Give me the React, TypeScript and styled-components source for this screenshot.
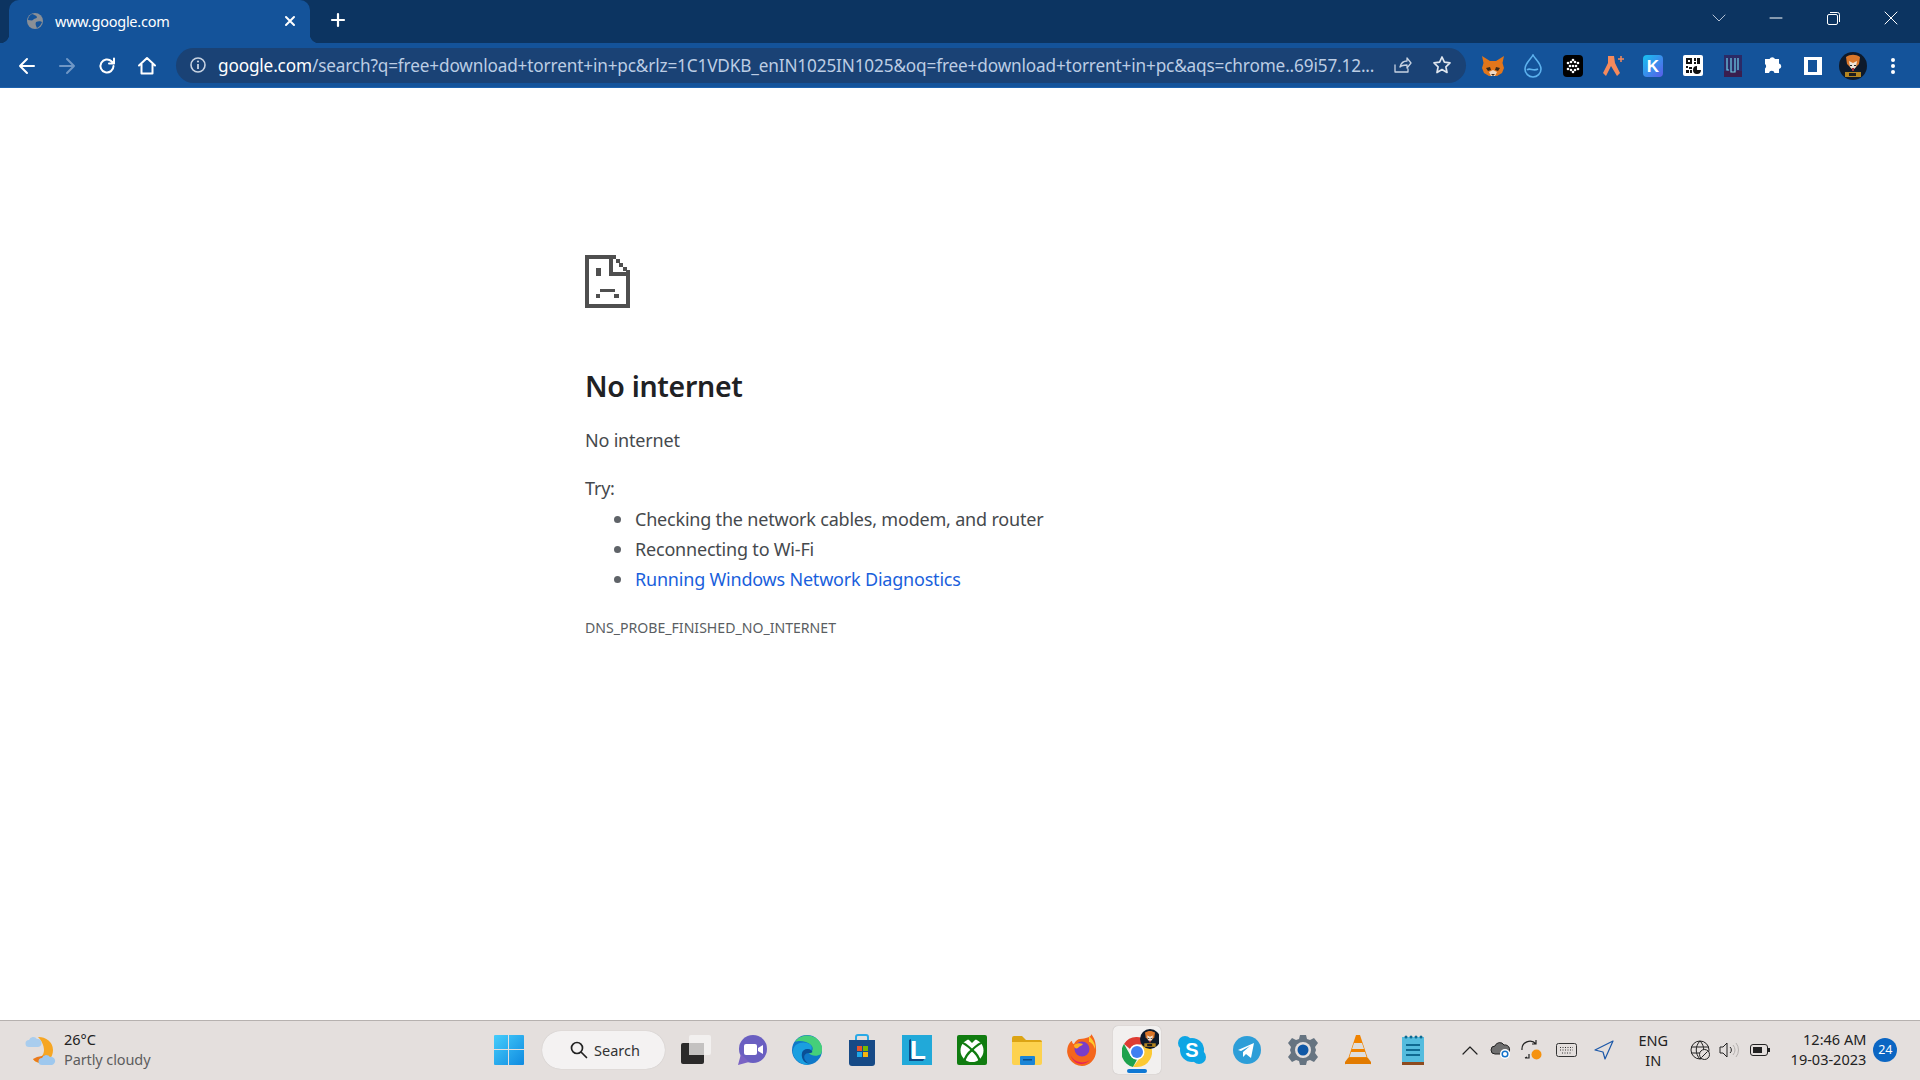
import React from 'react';
import styled, { createGlobalStyle } from 'styled-components';

const GlobalStyle = createGlobalStyle`
  html, body { margin: 0; padding: 0; height: 100%; background: #fff; }
  body { font-family: "Noto Sans", "Open Sans", sans-serif; overflow: hidden; }
  #root { height: 100%; }
`;

const Screen = styled.div`
  width: 1920px;
  height: 1080px;
  display: flex;
  flex-direction: column;
`;

const TabStrip = styled.div`
  height: 43px;
  background: #0c3461;
  display: flex;
  align-items: flex-end;
  padding-left: 9px;
  flex-shrink: 0;
`;

const Tab = styled.div`
  position: relative;
  width: 301px;
  height: 43px;
  background: #14539a;
  border-radius: 10px 10px 0 0;
  display: flex;
  align-items: center;
  padding: 0 14px 2px 17px;
  box-sizing: border-box;
  color: #fff;
  &::before, &::after {
    content: '';
    position: absolute;
    bottom: 0;
    width: 9px;
    height: 9px;
  }
  &::before { left: -9px; background: radial-gradient(circle at 0 0, #0c3461 9px, #14539a 9.5px); }
  &::after { right: -9px; background: radial-gradient(circle at 100% 0, #0c3461 9px, #14539a 9.5px); }
`;

const TabTitle = styled.span`
  flex: 1;
  margin-left: 11px;
  font-size: 14.5px;
  letter-spacing: -0.25px;
  white-space: nowrap;
`;

const NewTab = styled.div`
  width: 26px;
  height: 26px;
  margin: 0 0 3px 15px;
  display: flex;
  align-items: center;
  justify-content: center;
  align-self: center;
`;

const WindowControls = styled.div`
  margin-left: auto;
  align-self: stretch;
  display: flex;
  align-items: center;
  padding-bottom: 7px;
`;

const WindowButton = styled.div<{ $w: number }>`
  width: ${(p) => p.$w}px;
  display: flex;
  justify-content: center;
  align-items: center;
`;

const Toolbar = styled.div`
  height: 45px;
  background: #14539a;
  border-bottom: 1px solid #1d62ae;
  box-sizing: border-box;
  display: flex;
  align-items: center;
  padding: 1px 7px 0;
  flex-shrink: 0;
`;

const ToolButton = styled.div`
  width: 40px;
  height: 36px;
  flex-shrink: 0;
  display: flex;
  align-items: center;
  justify-content: center;
`;

const Omnibox = styled.div`
  flex: 1;
  min-width: 0;
  height: 35px;
  margin: 0 7px 1px 9px;
  background: #1a4275;
  border-radius: 18px;
  display: flex;
  align-items: center;
  padding: 0 4px 0 13px;
`;

const Url = styled.div`
  flex: 1;
  min-width: 0;
  margin-left: 11px;
  font-size: 17.2px;
  letter-spacing: -0.15px;
  color: #bccde4;
  white-space: nowrap;
  overflow: hidden;
`;

const UrlHost = styled.span`
  color: #fff;
`;

const Page = styled.main`
  flex: 1;
  background: #fff;
  padding: 167px 0 0 585px;
  color: #45494d;
  font-size: 18px;
  letter-spacing: -0.2px;
`;

const ErrorIcon = styled.svg`
  display: block;
`;

const Heading = styled.h1`
  margin: 56px 0 0;
  font-size: 28.5px;
  line-height: 44px;
  font-weight: 600;
  color: #202124;
  letter-spacing: -0.3px;
`;

const Message = styled.p`
  margin: 17px 0 0;
  line-height: 30px;
`;

const TryLabel = styled.p`
  margin: 19px 0 0;
  line-height: 29px;
`;

const Suggestions = styled.ul`
  margin: 0;
  padding: 0 0 0 50px;
  list-style: disc;
  li { height: 30px; line-height: 30px; }
  li::marker { color: #5f6368; font-size: 21px; }
`;

const Suggestion = styled.a`
  color: #1a5fdc;
  text-decoration: none;
`;

const ErrorCode = styled.div`
  margin-top: 22px;
  font-size: 14.1px;
  line-height: 26px;
  letter-spacing: 0;
  color: #5a5e62;
`;

const Taskbar = styled.footer`
  height: 60px;
  background: #e4dfdd;
  border-top: 1px solid #b6b1af;
  box-sizing: border-box;
  display: flex;
  align-items: center;
  padding-bottom: 2px;
  flex-shrink: 0;
`;

const Weather = styled.div`
  width: 481px;
  flex-shrink: 0;
  padding-left: 24px;
  box-sizing: border-box;
  display: flex;
  align-items: center;
  gap: 6px;
`;

const WeatherText = styled.div`
  font-size: 14.5px;
  line-height: 20px;
  padding-bottom: 2px;
  color: #222;
`;

const WeatherNote = styled.div`
  color: #5d5d5d;
  letter-spacing: -0.1px;
`;

const AppSlot = styled.div<{ $w?: number }>`
  width: ${(p) => p.$w ?? 55.1}px;
  height: 58px;
  flex-shrink: 0;
  display: flex;
  align-items: center;
  justify-content: center;
`;

const ActiveTile = styled.div`
  position: relative;
  width: 48px;
  height: 48px;
  background: #f2f0ef;
  border-radius: 5px;
  box-shadow: 0 0 1px rgba(0, 0, 0, 0.25);
  display: flex;
  align-items: center;
  justify-content: center;
  &::after {
    content: '';
    position: absolute;
    left: 14px;
    bottom: 1px;
    width: 20px;
    height: 4px;
    border-radius: 2px;
    background: #0f78d4;
  }
`;

const SearchPill = styled.div`
  width: 123px;
  height: 38px;
  margin: 0 4px 0 6px;
  flex-shrink: 0;
  border-radius: 19px;
  background: #f4f2f2;
  box-shadow: 0 0 1px rgba(0, 0, 0, 0.2);
  display: flex;
  align-items: center;
  gap: 6px;
  padding-left: 28px;
  box-sizing: border-box;
  font-size: 14.5px;
  color: #333;
`;

const Tray = styled.div`
  flex: 1;
  display: flex;
  align-items: center;
  padding-left: 15px;
`;

const TrayItem = styled.div<{ $w: number }>`
  width: ${(p) => p.$w}px;
  flex-shrink: 0;
  display: flex;
  align-items: center;
  justify-content: center;
`;

const Language = styled.div`
  width: 46px;
  margin: 0 9px 0 7px;
  font-size: 14.5px;
  line-height: 20px;
  text-align: center;
  color: #222;
`;

const Clock = styled.div`
  width: 89px;
  font-size: 14.5px;
  line-height: 20px;
  padding-bottom: 2px;
  text-align: right;
  color: #222;
  white-space: nowrap;
`;

const Badge = styled.div`
  width: 24px;
  height: 24px;
  margin-left: 7px;
  border-radius: 50%;
  background: #0b66c3;
  color: #fff;
  font-size: 12.5px;
  display: flex;
  align-items: center;
  justify-content: center;
`;

function Globe() {
  return (
    <svg width="18" height="18" viewBox="0 0 18 18">
      <circle cx="9" cy="9" r="8" fill="#8a8f96" />
      <path d="M6 2c2 1 4 1 5 3 0 2-3 1-4 3-1 1-3 0-5 0 0-3 2-5 4-6zM10 10c2-1 5-1 6 0-1 3-3 5-5 6-1-2-2-4-1-6z" fill="#14539a" />
    </svg>
  );
}

const Stroke = ({ w = 20, h = 20, vb, color = '#fff', sw = 2, d }: { w?: number; h?: number; vb?: string; color?: string; sw?: number; d: string }) => (
  <svg width={w} height={h} viewBox={vb ?? `0 0 ${w} ${h}`} fill="none" stroke={color} strokeWidth={sw} strokeLinecap="round" strokeLinejoin="round">
    <path d={d} />
  </svg>
);

function Fox() {
  return (
    <svg width="24" height="22" viewBox="0 0 24 22">
      <path d="M1 1l8 5h6l8-5-1.500 7 1.500 5-2 5-5 3H8l-5-3-2-5 1.500-5z" fill="#e2761b" />
      <path d="M5 13l4-1 1 3-3 1zM19 13l-4-1-1 3 3 1z" fill="#3a2a1c" />
      <path d="M8 17l4-2 4 2-2 4h-4z" fill="#f0d9c4" />
      <path d="M10 19h4l-2 2z" fill="#3a2a1c" />
    </svg>
  );
}

function QrIcon() {
  return (
    <svg width="20" height="21" viewBox="0 0 20 21">
      <rect width="20" height="21" rx="2" fill="#fff" />
      <path d="M3 3h6v6H3zM5 5v2h2V5zM11 3h2v3h-2zM14 3h3v6h-3zM11 7h2v2h-2zM3 11h2v2H3zM6 12h3v2H6zM3 15h3v3H3zM7 15h2v3H7z" fill="#111" fillRule="evenodd" />
      <path d="M14 11a4 4 0 1 0 4 4h-4z" fill="#111" />
    </svg>
  );
}

function Snowflake() {
  return (
    <svg width="20" height="22" viewBox="0 0 20 22">
      <rect width="20" height="22" rx="4" fill="#000" />
      <g fill="#fff">
        {[[10, 5], [10, 17], [5, 8], [15, 8], [5, 14], [15, 14], [10, 11], [7, 11], [13, 11], [8, 7], [12, 7], [8, 15], [12, 15]].map(([cx, cy]) => (
          <circle key={`${cx}-${cy}`} cx={cx} cy={cy} r="1.300" />
        ))}
      </g>
    </svg>
  );
}

function Avatar({ size }: { size: number }) {
  return (
    <svg width={size} height={size} viewBox="0 0 28 28">
      <circle cx="14" cy="14" r="14" fill="#0e1a2b" />
      <path d="M7 5c4-3 10-3 14 0l-1 7-6 6-6-6z" fill="#d9762a" />
      <path d="M10 9l4 2 4-2-1 6-3 3-3-3z" fill="#eee3d6" />
      <path d="M11 13h2v1h-2zM15 13h2v1h-2z" fill="#222" />
      <path d="M13 16h2v3h-2z" fill="#a32c33" />
      <rect x="6" y="20" width="16" height="5" fill="#b38420" />
      <rect x="10" y="21" width="7" height="3" fill="#1d1d1d" />
    </svg>
  );
}

function WindowsLogo() {
  return (
    <svg width="30" height="30" viewBox="0 0 30 30">
      <defs>
        <linearGradient id="winA" x1="0" y1="0" x2="1" y2="1">
          <stop offset="0" stopColor="#45cdfb" />
          <stop offset="1" stopColor="#0f8ae0" />
        </linearGradient>
      </defs>
      <path d="M1 0h13v14H0V1a1 1 0 0 1 1-1zM15 0h14a1 1 0 0 1 1 1v13H15zM0 15h14v15H1a1 1 0 0 1-1-1zM15 15h15v14a1 1 0 0 1-1 1H15z" fill="url(#winA)" />
    </svg>
  );
}

function TaskView() {
  return (
    <svg width="31" height="30" viewBox="0 0 31 30">
      <rect x="8" y="0" width="22" height="20" rx="2" fill="#f2f0ef" />
      <rect x="0" y="8" width="23" height="21" rx="2" fill="#2b2a2a" />
      <path d="M8 8h15v12H8z" fill="#c4c2c1" />
    </svg>
  );
}

function ChatIcon() {
  return (
    <svg width="30" height="32" viewBox="0 0 30 32">
      <circle cx="16" cy="15" r="14" fill="#6a5fc1" />
      <path d="M4 20L1 31l11-3z" fill="#7a63c4" />
      <rect x="7" y="10" width="13" height="11" rx="2" fill="#fff" />
      <path d="M21 14l5-3v9l-5-3z" fill="#fff" />
    </svg>
  );
}

function EdgeIcon() {
  return (
    <svg width="30" height="30" viewBox="0 0 30 30">
      <circle cx="15" cy="15" r="15" fill="#0f78c8" />
      <path d="M3 7C8-2 24-2 29 9c2 4 1 8 0 10-4 3-10 2-12-1 4-1 5-5 2-8-4-4-12-5-16-3z" fill="#45cf7a" />
      <path d="M1 15C2 9 9 6 15 8c4 1 6 4 4 7-3-2-8-1-9 3-1 4 2 9 8 11-2 1-5 1-7 0C5 27 0 21 1 15z" fill="#1a9fe0" />
      <path d="M19 15c2 2 2 3-2 3-4 0-6 3-4 7 1 2 3 3 5 4-6-1-9-5-8-11 1-4 6-5 9-3z" fill="#0a4f96" />
    </svg>
  );
}

function StoreIcon() {
  return (
    <svg width="28" height="32" viewBox="0 0 28 32">
      <path d="M8 6V3a2 2 0 0 1 2-2h8a2 2 0 0 1 2 2v3" fill="none" stroke="#2aa9e6" strokeWidth="2" />
      <path d="M1 6h26v23a3 3 0 0 1-3 3H4a3 3 0 0 1-3-3z" fill="#164a86" />
      <rect x="9" y="12" width="5" height="5" fill="#e8562b" />
      <rect x="15" y="12" width="5" height="5" fill="#76b900" />
      <rect x="9" y="18" width="5" height="5" fill="#1ea7e8" />
      <rect x="15" y="18" width="5" height="5" fill="#f5b50f" />
    </svg>
  );
}

function LetterTile() {
  return (
    <svg width="30" height="30" viewBox="0 0 30 30">
      <rect width="30" height="30" fill="#21a9d9" />
      <path d="M7 5l2-1v19h14l-2 3H7z" fill="#0c4a86" />
      <text x="8" y="24" fontFamily="Liberation Sans, sans-serif" fontWeight="700" fontSize="26" fill="#fff">L</text>
    </svg>
  );
}

function XboxIcon() {
  return (
    <svg width="30" height="30" viewBox="0 0 30 30">
      <rect width="30" height="30" rx="2" fill="#107c10" />
      <circle cx="15" cy="15.500" r="11.500" fill="#fff" />
      <g fill="none" stroke="#107c10" strokeWidth="2.200">
        <path d="M3 7c5 1 9 5 12 8 3-3 7-7 12-8" />
        <path d="M15 15c-4 3-7 8-8 12M15 15c4 3 7 8 8 12" />
      </g>
      <path d="M10 3h10l-5 5z" fill="#107c10" />
    </svg>
  );
}

function FolderIcon() {
  return (
    <svg width="30" height="30" viewBox="0 0 30 30">
      <path d="M0 3a2 2 0 0 1 2-2h8l4 4h14a2 2 0 0 1 2 2v3H0z" fill="#dca414" />
      <path d="M0 7h30v21a2 2 0 0 1-2 2H2a2 2 0 0 1-2-2z" fill="#fdd24f" />
      <rect x="8" y="21" width="15" height="9" rx="1" fill="#1b85d6" />
      <rect x="11" y="24" width="9" height="1.500" fill="#0d4f8a" />
    </svg>
  );
}

function FirefoxIcon() {
  return (
    <svg width="30" height="32" viewBox="0 0 30 32">
      <path d="M15 32A15 15 0 0 1 1 12c1-3 3-5 4-5 0 2 1 3 2 3 1-3 4-5 6-5 6-1 12-2 11-5 3 3 5 8 5 15 1 9-6 17-14 17z" fill="#f4661c" />
      <path d="M3 20c3 8 13 11 20 6-6 6-16 6-20-6z" fill="#e5205e" />
      <path d="M22 2c3 3 7 8 6 13-2-5-4-7-6-7z" fill="#ffca2b" />
      <circle cx="15" cy="15" r="7.500" fill="#7a3dc8" />
      <path d="M7 11c3-2 6-2 9-1-1 2-4 2-5 4-2 1-4 0-4-3z" fill="#ffb020" />
    </svg>
  );
}

function ChromeIcon() {
  return (
    <svg width="30" height="30" viewBox="0 0 30 30">
      <path d="M15 0a15 15 0 0 1 13 7.500H15a7.500 7.500 0 0 0-7 4.500L2 7A15 15 0 0 1 15 0z" fill="#de3c33" />
      <path d="M2 7l6.500 11.500a7.500 7.500 0 0 0 6.500 4l-4 7.500A15 15 0 0 1 2 7z" fill="#1ea24d" />
      <path d="M28 7.500A15 15 0 0 1 15 30h-4l6-8a7.500 7.500 0 0 0 4-10 7 7 0 0 0-2-4.500z" fill="#fcc934" />
      <circle cx="15" cy="15" r="7.500" fill="#fff" />
      <circle cx="15" cy="15" r="6" fill="#3f80f2" />
    </svg>
  );
}

function SkypeIcon() {
  return (
    <svg width="28" height="28" viewBox="0 0 28 28">
      <circle cx="7" cy="7" r="7" fill="#0ea5e4" />
      <circle cx="21" cy="21" r="7" fill="#0ea5e4" />
      <circle cx="14" cy="14" r="12" fill="#0ea5e4" />
      <text x="14" y="21" textAnchor="middle" fontFamily="Liberation Sans, sans-serif" fontWeight="700" fontSize="20" fill="#fff">S</text>
    </svg>
  );
}

function TelegramIcon() {
  return (
    <svg width="28" height="28" viewBox="0 0 28 28">
      <circle cx="14" cy="14" r="14" fill="#2d9ed8" />
      <path d="M5 14l16-7-3 15-5-4-3 3v-5l7-6-9 5z" fill="#fff" />
    </svg>
  );
}

function GearIcon() {
  return (
    <svg width="30" height="30" viewBox="0 0 30 30">
      <path d="M12 0h6l1 4 3 1 4-2 4 5-3 4 1 3-1 3 3 4-4 5-4-2-3 1-1 4h-6l-1-4-3-1-4 2-4-5 3-4-1-3 1-3-3-4 4-5 4 2 3-1z" fill="#667481" />
      <circle cx="15" cy="15" r="8" fill="#e4dfdd" />
      <circle cx="15" cy="15" r="5.500" fill="#0f58a6" />
    </svg>
  );
}

function VlcIcon() {
  return (
    <svg width="26" height="30" viewBox="0 0 26 30">
      <path d="M11 0h4l8 24H3z" fill="#f08300" />
      <path d="M9 8h8l2 6H7zM6 17h14l1.500 5h-17z" fill="#dedede" />
      <path d="M3 23h20l3 4a1 1 0 0 1-1 2H1a1 1 0 0 1-1-2z" fill="#e27b00" />
    </svg>
  );
}

function NotepadIcon() {
  return (
    <svg width="22" height="30" viewBox="0 0 22 30">
      <rect x="0" y="2" width="22" height="25" fill="#54bcde" />
      <rect x="0" y="27" width="22" height="3" fill="#8e4b1f" />
      <g fill="#0f6a92">
        <circle cx="4" cy="2" r="1.500" /><circle cx="9" cy="2" r="1.500" /><circle cx="14" cy="2" r="1.500" /><circle cx="19" cy="2" r="1.500" />
        <rect x="4" y="9" width="14" height="2" /><rect x="4" y="14" width="14" height="2" /><rect x="4" y="19" width="14" height="2" />
      </g>
    </svg>
  );
}

const apps = [ChatIcon, EdgeIcon, StoreIcon, LetterTile, XboxIcon, FolderIcon, FirefoxIcon];
const appsAfterChrome = [SkypeIcon, TelegramIcon, GearIcon, VlcIcon, NotepadIcon];

export default function App() {
  return (
    <Screen>
      <GlobalStyle />
      <TabStrip>
        <Tab>
          <Globe />
          <TabTitle>www.google.com</TabTitle>
          <Stroke w={12} h={12} d="M2 2l8 8M10 2l-8 8" sw={2} />
        </Tab>
        <NewTab>
          <Stroke w={16} h={16} d="M8 2v12M2 8h12" sw={2.200} />
        </NewTab>
        <WindowControls>
          <WindowButton $w={57}>
            <Stroke w={14} h={8} d="M1 1l6 6 6-6" sw={0.900} color="#c8d3e2" />
          </WindowButton>
          <WindowButton $w={57}>
            <Stroke w={14} h={2} d="M1 1h12" sw={1} />
          </WindowButton>
          <WindowButton $w={58}>
            <svg width="13" height="13" viewBox="0 0 13 13" fill="none" stroke="#fff">
              <rect x="0.500" y="2.500" width="10" height="10" rx="1.500" />
              <path d="M3 .500h7.500a2 2 0 0 1 2 2V10" />
            </svg>
          </WindowButton>
          <WindowButton $w={58}>
            <Stroke w={14} h={14} d="M1 1l12 12M13 1L1 13" sw={1} />
          </WindowButton>
        </WindowControls>
      </TabStrip>

      <Toolbar>
        <ToolButton><Stroke d="M17 10H3M10 3l-7 7 7 7" /></ToolButton>
        <ToolButton><Stroke d="M3 10h14M10 3l7 7-7 7" color="#6f97c6" /></ToolButton>
        <ToolButton><Stroke d="M16.500 10a6.500 6.500 0 1 1-2-4.700L17 7.500M17 2.500v5h-5" /></ToolButton>
        <ToolButton><Stroke d="M2 9.500L10 2l8 7.500M4.500 8v9.500h11V8" /></ToolButton>
        <Omnibox>
          <svg width="18" height="18" viewBox="0 0 18 18" fill="none">
            <circle cx="9" cy="9" r="7" stroke="#c8d3e2" strokeWidth="1.600" />
            <path d="M9 8v5" stroke="#c8d3e2" strokeWidth="1.800" />
            <circle cx="9" cy="5.500" r="1.100" fill="#c8d3e2" />
          </svg>
          <Url>
            <UrlHost>google.com</UrlHost>/search?q=free+download+torrent+in+pc&amp;rlz=1C1VDKB_enIN1025IN1025&amp;oq=free+download+torrent+in+pc&amp;aqs=chrome..69i57.12...
          </Url>
          <ToolButton>
            <Stroke d="M3 10v7h13v-3M8 12c1-4 4-6 7-6V3l4 5-4 5v-3c-3 0-5 0-7 2z" sw={1.300} color="#c8d3e2" />
          </ToolButton>
          <ToolButton>
            <Stroke d="M10 2l2.400 5.200 5.600.700-4.100 3.900 1.100 5.700-5-2.900-5 2.900 1.100-5.700L2 7.900l5.600-.700z" sw={1.700} color="#dfe6ef" />
          </ToolButton>
        </Omnibox>
        <ToolButton><Fox /></ToolButton>
        <ToolButton>
          <svg width="18" height="24" viewBox="0 0 18 24" fill="none" stroke="#5db2ee" strokeWidth="1.600">
            <path d="M9 1c2 4 8 8 8 14a8 8 0 0 1-16 0C1 9 7 5 9 1z" />
            <path d="M3 16c3-3 6 2 11-1" />
          </svg>
        </ToolButton>
        <ToolButton><Snowflake /></ToolButton>
        <ToolButton>
          <svg width="24" height="22" viewBox="0 0 24 22">
            <path d="M7 1h6l1 7 5 10-3 3-6-10-5 10-3-3 5-10z" fill="#f58a5c" />
            <path d="M20 1v6M17 4h6" stroke="#f58a5c" strokeWidth="1.500" />
          </svg>
        </ToolButton>
        <ToolButton>
          <svg width="20" height="22" viewBox="0 0 20 22">
            <defs>
              <linearGradient id="kTile" x1="0" y1="0" x2="1" y2="1">
                <stop offset="0" stopColor="#16c3f0" />
                <stop offset="1" stopColor="#5a5be8" />
              </linearGradient>
            </defs>
            <rect width="20" height="22" rx="4" fill="url(#kTile)" />
            <text x="10" y="17" textAnchor="middle" fontFamily="Liberation Sans, sans-serif" fontWeight="700" fontSize="17" fill="#fff">K</text>
          </svg>
        </ToolButton>
        <ToolButton><QrIcon /></ToolButton>
        <ToolButton>
          <svg width="18" height="22" viewBox="0 0 18 22" fill="none">
            <rect width="18" height="22" fill="#2b2a66" />
            <rect y="16" width="18" height="6" fill="#3a1e4e" />
            <path d="M3 3v12h2M7 3v14h4V3M14 3v12" stroke="#6fd0ea" strokeWidth="1.200" />
          </svg>
        </ToolButton>
        <ToolButton>
          <svg width="20" height="20" viewBox="0 2 20 20">
            <path d="M3 5h3.500a3 3 0 0 1 5.500 0H16v4.500a2.800 2.800 0 0 1 0 5.500V19h-4.500a2.800 2.800 0 0 0-5.500 0H2v-4.500a2.800 2.800 0 0 0 0-4.500V5z" fill="#fff" />
          </svg>
        </ToolButton>
        <ToolButton>
          <svg width="18" height="18" viewBox="0 0 18 18">
            <path d="M0 0h18v18H0zM4 3v12h9V3z" fill="#fff" fillRule="evenodd" />
          </svg>
        </ToolButton>
        <ToolButton><Avatar size={28} /></ToolButton>
        <ToolButton>
          <svg width="6" height="18" viewBox="0 0 6 18" fill="#fff">
            <circle cx="3" cy="3" r="2" /><circle cx="3" cy="9" r="2" /><circle cx="3" cy="15" r="2" />
          </svg>
        </ToolButton>
      </Toolbar>

      <Page>
        <ErrorIcon width="45" height="53" viewBox="0 0 45 53" shapeRendering="crispEdges" fill="#4f4f4f">
          <rect x="0" y="0" width="4" height="53" />
          <rect x="0" y="49" width="45" height="4" />
          <rect x="0" y="0" width="31" height="4" />
          <rect x="41" y="15" width="4" height="38" />
          <rect x="24" y="0" width="4" height="21" />
          <rect x="24" y="17" width="21" height="4" />
          <rect x="31" y="4" width="4" height="4" />
          <rect x="34" y="8" width="4" height="4" />
          <rect x="38" y="12" width="4" height="4" />
          <rect x="11" y="13" width="5" height="8" />
          <rect x="15" y="34" width="15" height="3" />
          <rect x="11" y="39" width="4" height="4" />
          <rect x="29" y="39" width="5" height="4" />
        </ErrorIcon>
        <Heading>No internet</Heading>
        <Message>No internet</Message>
        <TryLabel>Try:</TryLabel>
        <Suggestions>
          <li>Checking the network cables, modem, and router</li>
          <li>Reconnecting to Wi-Fi</li>
          <li><Suggestion>Running Windows Network Diagnostics</Suggestion></li>
        </Suggestions>
        <ErrorCode>DNS_PROBE_FINISHED_NO_INTERNET</ErrorCode>
      </Page>

      <Taskbar>
        <Weather>
          <svg width="34" height="32" viewBox="0 0 34 32">
            <path d="M14 3a14 13 0 0 1 15 13c0 8-6 14-14 13-3-1-5-2-6-4 6 1 11-3 11-9 0-5-3-10-6-13z" fill="#f6a623" />
            <path d="M9 25c4 5 12 5 17 0l-3-4-10 2z" fill="#ea7a1c" />
            <path d="M5 13a3.500 3.500 0 0 1 0-7 4.500 4.500 0 0 1 8-1 3.500 3.500 0 0 1 1 8z" fill="#a9cdee" />
            <path d="M18 31a3.500 3.500 0 0 1 0-7 4.500 4.500 0 0 1 8-1 4 4 0 0 1 2 8z" fill="#9ec8ee" />
          </svg>
          <WeatherText>
            26°C
            <WeatherNote>Partly cloudy</WeatherNote>
          </WeatherText>
        </Weather>
        <AppSlot $w={55}><WindowsLogo /></AppSlot>
        <SearchPill>
          <Stroke w={18} h={18} d="M11.500 11.500L16.500 16.500M12.500 7a5.500 5.500 0 1 1-11 0 5.500 5.500 0 0 1 11 0z" sw={1.700} color="#222" />
          Search
        </SearchPill>
        <AppSlot><TaskView /></AppSlot>
        {apps.map((Icon) => (
          <AppSlot key={Icon.name}><Icon /></AppSlot>
        ))}
        <AppSlot>
          <ActiveTile>
            <svg width="44" height="44" viewBox="0 0 44 44">
              <g transform="translate(7 9)"><ChromeIcon /></g>
              <g transform="translate(25 1)"><Avatar size={20} /></g>
            </svg>
          </ActiveTile>
        </AppSlot>
        {appsAfterChrome.map((Icon) => (
          <AppSlot key={Icon.name}><Icon /></AppSlot>
        ))}
        <Tray>
          <TrayItem $w={30}><Stroke w={16} h={10} d="M1 9l7-7 7 7" sw={1.200} color="#222" /></TrayItem>
          <TrayItem $w={30}>
            <svg width="21" height="20" viewBox="0 0 21 20">
              <path d="M5 14a4 4 0 0 1 0-8 5 5 0 0 1 9-1 4 4 0 0 1 2 9z" fill="#6f6f6f" stroke="#222" strokeWidth="1" />
              <circle cx="15" cy="14" r="5" fill="#fff" />
              <circle cx="15" cy="14" r="2.800" fill="none" stroke="#1472c9" strokeWidth="1.500" />
            </svg>
          </TrayItem>
          <TrayItem $w={32}>
            <svg width="22" height="21" viewBox="0 0 22 21" fill="none">
              <path d="M2 11a8 8 0 0 1 14-6M16 1v4h-4M5 19h4v-4M5 19l2-1" stroke="#222" strokeWidth="1.200" />
              <circle cx="16.500" cy="15.500" r="5" fill="#f5920f" />
            </svg>
          </TrayItem>
          <TrayItem $w={38}>
            <svg width="21" height="14" viewBox="0 0 21 14" fill="none" stroke="#333">
              <rect x=".5" y=".5" width="20" height="13" rx="2" />
              <path d="M4 4.500h13M4 7h13M6 10h9" strokeDasharray="1 1.500" />
            </svg>
          </TrayItem>
          <TrayItem $w={38}>
            <Stroke w={20} h={20} d="M19 1L1 10l8 2 2 7z" sw={1.200} color="#1a57a8" />
          </TrayItem>
          <Language>ENG<br />IN</Language>
          <TrayItem $w={30}>
            <svg width="20" height="20" viewBox="0 0 20 20" fill="none" stroke="#222" strokeWidth="1">
              <circle cx="10" cy="10" r="9" />
              <path d="M1 7h18M1 13h18M10 1c-5 5-5 13 0 18M10 1c5 5 5 13 0 18" />
              <circle cx="14.500" cy="14.500" r="5" fill="#e4dfdd" />
              <path d="M11.500 17.500l6-6" />
            </svg>
          </TrayItem>
          <TrayItem $w={28}>
            <svg width="20" height="16" viewBox="0 0 20 16" fill="none" stroke="#222" strokeWidth="1">
              <path d="M1 5h3l4-4v14l-4-4H1z" />
              <path d="M11 5a4 4 0 0 1 0 6" />
              <path d="M14 3a8 8 0 0 1 0 10M17 1a11 11 0 0 1 0 14" stroke="#b5b1af" />
            </svg>
          </TrayItem>
          <TrayItem $w={34}>
            <svg width="20" height="12" viewBox="0 0 20 12">
              <rect x=".5" y=".5" width="17" height="11" rx="2.500" fill="none" stroke="#222" />
              <rect x="3" y="3" width="9" height="6" fill="#222" />
              <rect x="18" y="4" width="2" height="4" fill="#222" />
            </svg>
          </TrayItem>
          <Clock>12:46 AM<br />19-03-2023</Clock>
          <Badge>24</Badge>
        </Tray>
      </Taskbar>
    </Screen>
  );
}
